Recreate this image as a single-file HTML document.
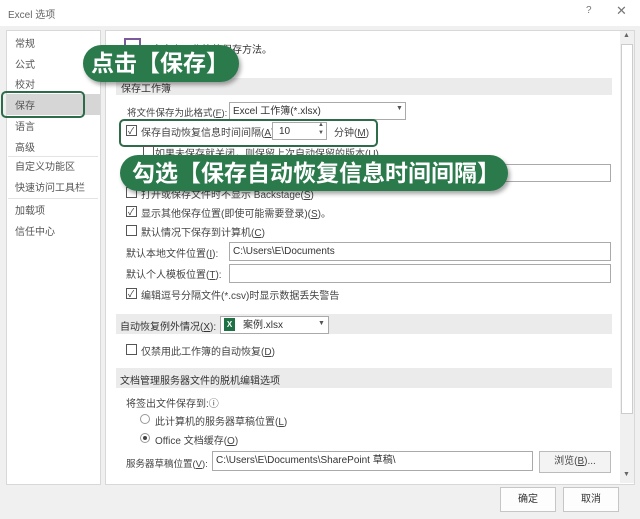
<!DOCTYPE html>
<html><head><meta charset="utf-8"><style>
*{margin:0;padding:0;box-sizing:border-box}
body{width:640px;height:519px;background:#f0f0f0;font-family:"Liberation Sans","Noto Sans CJK SC",sans-serif;font-size:10px;color:#444;position:relative;overflow:hidden}
.a{position:absolute;white-space:nowrap}
.cb{position:absolute;width:11px;height:11px;border:1px solid #555;background:#fff}
.cb.on::after{content:"✓";position:absolute;left:1px;top:-2px;font-size:9px;color:#333}
.in{position:absolute;border:1px solid #aaa;background:#fff;padding-left:3px;line-height:17px;font-size:10px;color:#333}
.bar{position:absolute;left:116px;width:496px;background:#ebebeb}
.pill{position:absolute;background:#2a7a4c;color:#fff;font-weight:bold;border-radius:20px;box-shadow:2px 3px 4px rgba(0,0,0,.35);font-family:"Liberation Sans","Noto Sans CJK SC",sans-serif}
.rad{position:absolute;width:10px;height:10px;border:1px solid #999;border-radius:50%;background:#fff}
</style></head><body>
<div class="a" style="left:0;top:0;width:640px;height:26px;background:#fff"></div>
<div class="a" style="left:8px;top:6px;color:#666">Excel 选项</div>
<div class="a" style="left:586px;top:5px;color:#777">?</div>
<div class="a" style="left:616px;top:3px;color:#777;font-size:13px">✕</div>

<div class="a" style="left:6px;top:30px;width:95px;height:455px;background:#fff;border:1px solid #d8d8d8"></div>
<div class="a" style="left:7px;top:94px;width:93px;height:21px;background:#d6d6d6"></div>
<div class="a" style="left:15px;top:35px;line-height:20.7px;color:#555">常规<br>公式<br>校对<br>保存<br>语言<br>高级</div>
<div class="a" style="left:8px;top:156px;width:90px;height:1px;background:#e3e3e3"></div>
<div class="a" style="left:15px;top:158px;line-height:20.7px;color:#555">自定义功能区<br>快速访问工具栏</div>
<div class="a" style="left:8px;top:198px;width:90px;height:1px;background:#e3e3e3"></div>
<div class="a" style="left:15px;top:202px;line-height:20.7px;color:#555">加载项<br>信任中心</div>
<div class="a" style="left:1px;top:91px;width:84px;height:27px;border:2px solid #2e6b48;border-radius:5px"></div>

<div class="a" style="left:105px;top:30px;width:530px;height:455px;background:#fff;border:1px solid #d8d8d8"></div>
<div class="a" style="left:620px;top:31px;width:14px;height:452px;background:#f0f0f0"></div>
<div class="a" style="left:621px;top:44px;width:12px;height:370px;background:#fff;border:1px solid #ccc"></div>
<div class="a" style="left:623px;top:32px;font-size:7px;color:#666">▲</div>
<div class="a" style="left:623px;top:471px;font-size:7px;color:#666">▼</div>

<div class="a" style="left:124px;top:38px;width:17px;height:17px;border:2px solid #7a5a9a"></div>
<div class="a" style="left:152px;top:41px;color:#333">自定义工作簿的保存方法。</div>
<div class="bar" style="top:78px;height:17px"></div>
<div class="a" style="left:121px;top:80px;color:#333">保存工作簿</div>
<div class="a" style="left:127px;top:105px;font-size:9.5px">将文件保存为此格式(<u>F</u>):</div>
<div class="in" style="left:229px;top:102px;width:177px;height:18px">Excel 工作簿(*.xlsx)</div>
<div class="a" style="left:396px;top:105px;font-size:7px;color:#555">▼</div>
<div class="cb on" style="left:126px;top:125px"></div>
<div class="a" style="left:141px;top:124px">保存自动恢复信息时间间隔(<u>A</u>)</div>
<div class="in" style="left:272px;top:122px;width:55px;height:18px;padding-left:6px">10</div>
<div class="a" style="left:318px;top:121px;font-size:6px;color:#555;line-height:8px">▲<br>▼</div>
<div class="a" style="left:334px;top:124px">分钟(<u>M</u>)</div>
<div class="a" style="left:119px;top:119px;width:259px;height:28px;border:2px solid #2e6b48;border-radius:5px"></div>
<div class="cb" style="left:143px;top:146px"></div>
<div class="a" style="left:155px;top:145px">如果未保存就关闭，则保留上次自动保留的版本(U)</div>
<div class="in" style="left:230px;top:164px;width:381px;height:18px"></div>
<div class="cb" style="left:126px;top:187px"></div>
<div class="a" style="left:141px;top:186px">打开或保存文件时不显示 Backstage(<u>S</u>)</div>
<div class="cb on" style="left:126px;top:206px"></div>
<div class="a" style="left:141px;top:205px">显示其他保存位置(即使可能需要登录)(<u>S</u>)。</div>
<div class="cb" style="left:126px;top:225px"></div>
<div class="a" style="left:141px;top:224px">默认情况下保存到计算机(<u>C</u>)</div>
<div class="a" style="left:126px;top:245px">默认本地文件位置(<u>I</u>):</div>
<div class="in" style="left:229px;top:242px;width:382px;height:19px">C:\Users\E\Documents</div>
<div class="a" style="left:126px;top:266px">默认个人模板位置(<u>T</u>):</div>
<div class="in" style="left:229px;top:264px;width:382px;height:19px"></div>
<div class="cb on" style="left:126px;top:288px"></div>
<div class="a" style="left:141px;top:287px">编辑逗号分隔文件(*.csv)时显示数据丢失警告</div>

<div class="bar" style="top:314px;height:20px"></div>
<div class="a" style="left:120px;top:318px;color:#333">自动恢复例外情况(<u>X</u>):</div>
<div class="in" style="left:220px;top:316px;width:109px;height:18px;padding-left:22px">案例.xlsx</div>
<div class="a" style="left:224px;top:318px;width:11px;height:13px;background:#1e7145;color:#fff;font-size:8px;font-weight:bold;text-align:center;line-height:13px">X</div>
<div class="a" style="left:318px;top:320px;font-size:7px;color:#555">▼</div>
<div class="cb" style="left:126px;top:344px"></div>
<div class="a" style="left:141px;top:343px">仅禁用此工作簿的自动恢复(<u>D</u>)</div>

<div class="bar" style="top:368px;height:20px"></div>
<div class="a" style="left:120px;top:372px;color:#333">文档管理服务器文件的脱机编辑选项</div>
<div class="a" style="left:126px;top:395px">将签出文件保存到:ⓘ</div>
<div class="rad" style="left:140px;top:414px"></div>
<div class="a" style="left:155px;top:413px">此计算机的服务器草稿位置(<u>L</u>)</div>
<div class="rad" style="left:140px;top:433px"></div>
<div class="a" style="left:143px;top:436px;width:4px;height:4px;border-radius:50%;background:#444"></div>
<div class="a" style="left:155px;top:432px">Office 文档缓存(<u>O</u>)</div>
<div class="a" style="left:126px;top:456px;font-size:9.5px">服务器草稿位置(<u>V</u>):</div>
<div class="in" style="left:212px;top:451px;width:321px;height:20px;line-height:18px">C:\Users\E\Documents\SharePoint 草稿\</div>
<div class="a" style="left:539px;top:451px;width:72px;height:22px;border:1px solid #bbb;background:#f3f3f3;text-align:center;line-height:20px">浏览(<u>B</u>)...</div>

<div class="a" style="left:500px;top:487px;width:56px;height:25px;border:1px solid #c6c6c6;background:#fdfdfd;text-align:center;line-height:23px;color:#333">确定</div>
<div class="a" style="left:563px;top:487px;width:56px;height:25px;border:1px solid #c6c6c6;background:#fdfdfd;text-align:center;line-height:23px;color:#333">取消</div>

<div class="pill" style="left:83px;top:45px;width:156px;height:37px;font-size:23px;line-height:37px;padding-left:8px">点击【保存】</div>
<div class="pill" style="left:120px;top:155px;width:388px;height:36px;font-size:23px;line-height:36px;padding-left:12px">勾选【保存自动恢复信息时间间隔】</div>
</body></html>
